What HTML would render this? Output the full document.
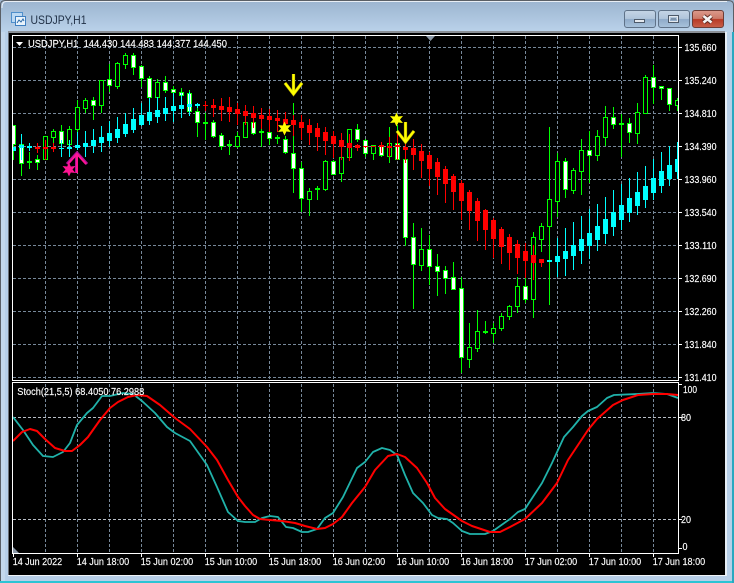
<!DOCTYPE html>
<html><head><meta charset="utf-8"><title>USDJPY,H1</title>
<style>
html,body{margin:0;padding:0;background:#b9d1ea;width:734px;height:583px;overflow:hidden}
svg{display:block}
text{font-family:"Liberation Sans",sans-serif;fill:#fff;font-size:10.5px;stroke:#fff;stroke-width:.15px}
.c{shape-rendering:crispEdges}
</style></head><body>
<svg width="734" height="583" viewBox="0 0 734 583" xmlns="http://www.w3.org/2000/svg">
<defs>
<linearGradient id="tb" x1="0" y1="0" x2="0" y2="1"><stop offset="0" stop-color="#9bb4cf"/><stop offset="1" stop-color="#bad2ea"/></linearGradient>
<linearGradient id="btn" x1="0" y1="0" x2="0" y2="1"><stop offset="0" stop-color="#c5d5e6"/><stop offset=".48" stop-color="#b0c5db"/><stop offset=".52" stop-color="#8fabc9"/><stop offset="1" stop-color="#a9c3dc"/></linearGradient>
<linearGradient id="cls" x1="0" y1="0" x2="0" y2="1"><stop offset="0" stop-color="#dc9a8c"/><stop offset=".48" stop-color="#cc7a68"/><stop offset=".52" stop-color="#b83a26"/><stop offset="1" stop-color="#c8604a"/></linearGradient>
<clipPath id="m"><rect x="13" y="36" width="666" height="344"/></clipPath>
<clipPath id="s"><rect x="13" y="383" width="666" height="170"/></clipPath>
</defs>
<!-- window frame -->
<rect width="734" height="583" fill="#b7cfe8"/>
<rect x="0" y="0" width="734" height="32" fill="url(#tb)"/>
<path d="M0.5 583V5Q0.5 .5 5 .5H728Q733.5 .5 733.5 5V583" fill="none" stroke="#5a5f66"/>
<path d="M2 8Q2 1.5 6 1.5H727" fill="none" stroke="#e8eef5"/>
<rect x="1" y="32" width="4" height="549" fill="#c4d8ec"/>
<rect x="725" y="32" width="2" height="544" fill="#e6eef6"/>
<rect x="0" y="581" width="734" height="2" fill="#2cc4d4"/>
<rect x="732" y="32" width="2" height="551" fill="#2aa8c0"/>
<rect x="8" y="31" width="717" height="2" fill="#8a8f96"/>
<rect x="8" y="33" width="1" height="542" fill="#6a6f76"/>
<rect x="9" y="33" width="716" height="542" fill="#000"/>
<rect x="8" y="575" width="718" height="1" fill="#f0f4f8"/>
<!-- icon -->
<g class="c">
<rect x="11.5" y="12.5" width="11" height="10" fill="#bcd9f3" stroke="#4f8fcb"/>
<rect x="15.5" y="16.5" width="10" height="9" fill="#eaf4fc" stroke="#3f7fc0"/>
</g>
<path d="M17 23l2-3 2 2 2-3 1 2" fill="none" stroke="#2b6aa8"/>
<text x="30.500" y="24" style="font-size:12px;fill:#1f2f45;stroke:none" textLength="56" lengthAdjust="spacingAndGlyphs">USDJPY,H1</text>
<!-- buttons -->
<rect x="624.500" y="10.500" width="31" height="17" rx="2.500" fill="url(#btn)" stroke="#5f7288"/>
<rect x="658.500" y="10.500" width="31" height="17" rx="2.500" fill="url(#btn)" stroke="#5f7288"/>
<rect x="692.500" y="10.500" width="31" height="17" rx="2.500" fill="url(#cls)" stroke="#6e3d36"/>
<rect x="634.500" y="19.500" width="10" height="3" fill="#e4e9ef" stroke="#4d5a6a" class="c"/>
<rect x="668.500" y="15.500" width="10" height="7" fill="none" stroke="#4d5a6a" class="c"/>
<rect x="669.500" y="16.500" width="8" height="5" fill="none" stroke="#e4e9ef" class="c"/>
<rect x="671" y="18" width="5" height="2" fill="#7d93ab" class="c"/>
<path d="M703.500 16l8 6.500M711.500 16l-8 6.500" stroke="#5d2a22" stroke-width="4.500" fill="none"/>
<path d="M703.500 16l8 6.500M711.500 16l-8 6.500" stroke="#f4f4f4" stroke-width="2.600" fill="none"/>

<!-- grid -->
<g class="c" fill="none" stroke="#778899" stroke-dasharray="3 2">
<path d="M13 47.500H679M13 80.500H679M13 113.500H679M13 146.500H679M13 179.500H679M13 212.500H679M13 245.500H679M13 278.500H679M13 311.500H679M13 344.500H679M13 377.500H679"/>
<path d="M45.500 36V380M77.500 36V380M109.500 36V380M141.500 36V380M173.500 36V380M205.500 36V380M237.500 36V380M269.500 36V380M301.500 36V380M333.500 36V380M365.500 36V380M397.500 36V380M429.500 36V380M461.500 36V380M493.500 36V380M525.500 36V380M557.500 36V380M589.500 36V380M621.500 36V380M653.500 36V380"/>
<path d="M45.500 384V553M77.500 384V553M109.500 384V553M141.500 384V553M173.500 384V553M205.500 384V553M237.500 384V553M269.500 384V553M301.500 384V553M333.500 384V553M365.500 384V553M397.500 384V553M429.500 384V553M461.500 384V553M493.500 384V553M525.500 384V553M557.500 384V553M589.500 384V553M621.500 384V553M653.500 384V553"/>
<path stroke="#b8bec6" d="M13 417.500H679M13 519.500H679"/>
</g>

<!-- candles -->
<g class="c" clip-path="url(#m)">
<path fill="none" stroke="#00ff00" d="M13.500 125V160M21.500 144V176M29.500 152V169M37.500 155V170M45.500 136V160M53.500 129V147M61.500 125V157M69.500 126V157M77.500 100V137M85.500 98V113M93.500 97V120M101.500 80V113M109.500 64V92M117.500 62V89M125.500 53V69M133.500 53V75M141.500 65V87M149.500 76V104M157.500 79V103M165.500 76V93M173.500 86V100M181.500 88V100M189.500 90V112M197.500 107V137M205.500 113V140M213.500 120V138M221.500 133V150M229.500 140V155M237.500 132V148M245.500 122V137M253.500 122V135M261.500 125V147M269.500 130V145M277.500 135V144M285.500 136V154M293.500 103V193M301.500 162V212M309.500 188V216M317.500 186V200M325.500 160V191M333.500 160V175M341.500 146V182M349.500 129V158M357.500 124V142M365.500 139V157M373.500 145V160M381.500 143V157M389.500 127V163M397.500 125V160M405.500 145V246M413.500 223V309M421.500 228V271M429.500 235V285M437.500 254V296M445.500 266V294M453.500 262V290M461.500 277V373M469.500 323V368M477.500 310V352M485.500 321V334M493.500 323V343M501.500 313V331M509.500 305V320M517.500 277V313M525.500 278V303M533.500 232V318M541.500 223V252M549.500 127V305M557.500 153V217M565.500 158V198M573.500 168V194M581.500 139V195M589.500 131V183M597.500 130V161M605.500 106V146M613.500 107V129M621.500 114V157M629.500 118V143M637.500 103V144M645.500 75V113M653.500 65V104M661.500 87V100M669.500 88V111M677.500 98V111"/>
<path fill="#000" stroke="#00ff00" d="M43.500 136.500h4V159.500h-4zM51.500 131.500h4V137.500h-4zM67.500 129.500h4V144.500h-4zM75.500 107.500h4V129.500h-4zM83.500 100.500h4V108.500h-4zM99.500 80.500h4V105.500h-4zM115.500 63.500h4V86.500h-4zM123.500 55.500h4V64.500h-4zM155.500 82.500h4V97.500h-4zM235.500 136.500h4V146.500h-4zM243.500 122.500h4V137.500h-4zM307.500 191.500h4V199.500h-4zM323.500 161.500h4V189.500h-4zM339.500 157.500h4V173.500h-4zM347.500 129.500h4V157.500h-4zM371.500 145.500h4V153.500h-4zM387.500 143.500h4V156.500h-4zM419.500 249.500h4V265.500h-4zM467.500 347.500h4V359.500h-4zM475.500 331.500h4V348.500h-4zM491.500 328.500h4V333.500h-4zM499.500 316.500h4V328.500h-4zM507.500 306.500h4V316.500h-4zM515.500 286.500h4V306.500h-4zM531.500 237.500h4V299.500h-4zM539.500 226.500h4V239.500h-4zM547.500 199.500h4V226.500h-4zM555.500 161.500h4V201.500h-4zM571.500 170.500h4V190.500h-4zM579.500 150.500h4V171.500h-4zM595.500 136.500h4V155.500h-4zM603.500 117.500h4V137.500h-4zM635.500 112.500h4V133.500h-4zM643.500 77.500h4V113.500h-4zM675.500 100.500h4V105.500h-4z"/>
<path fill="#fff" stroke="#00ff00" d="M11.500 125.500h4V144.500h-4zM19.500 144.500h4V163.500h-4zM35.500 159.500h4V162.500h-4zM59.500 131.500h4V143.500h-4zM91.500 100.500h4V105.500h-4zM107.500 79.500h4V85.500h-4zM131.500 55.500h4V67.500h-4zM139.500 66.500h4V78.500h-4zM147.500 78.500h4V97.500h-4zM163.500 82.500h4V90.500h-4zM171.500 89.500h4V92.500h-4zM179.500 92.500h4V95.500h-4zM187.500 93.500h4V111.500h-4zM195.500 111.500h4V122.500h-4zM211.500 122.500h4V136.500h-4zM219.500 135.500h4V146.500h-4zM251.500 122.500h4V133.500h-4zM267.500 132.500h4V138.500h-4zM283.500 139.500h4V152.500h-4zM291.500 153.500h4V168.500h-4zM299.500 168.500h4V198.500h-4zM331.500 161.500h4V174.500h-4zM355.500 129.500h4V139.500h-4zM363.500 140.500h4V153.500h-4zM379.500 145.500h4V155.500h-4zM395.500 143.500h4V159.500h-4zM403.500 159.500h4V237.500h-4zM411.500 237.500h4V264.500h-4zM427.500 249.500h4V266.500h-4zM435.500 266.500h4V271.500h-4zM443.500 270.500h4V278.500h-4zM451.500 277.500h4V289.500h-4zM459.500 288.500h4V357.500h-4zM523.500 286.500h4V299.500h-4zM563.500 161.500h4V189.500h-4zM587.500 150.500h4V155.500h-4zM611.500 117.500h4V124.500h-4zM627.500 123.500h4V132.500h-4zM651.500 77.500h4V87.500h-4zM659.500 86.500h4V88.500h-4zM667.500 88.500h4V104.500h-4z"/>
<path fill="#00ff00" d="M27 161h5v2h-5zM203 122h5v2h-5zM227 144h5v2h-5zM259 131h5v2h-5zM275 137h5v2h-5zM315 188h5v2h-5zM483 331h5v2h-5zM619 123h5v2h-5z"/>
<!-- cyan overlay -->
<path fill="none" stroke="#00ffff" d="M21.500 134V160M29.500 143V151M61.500 140V157M69.500 140V157M77.500 132V150M85.500 131V157M93.500 129V153M101.500 126V152M109.500 121V147M117.500 117V143M125.500 113V137M133.500 108V133M141.500 103V126M149.500 98V125M157.500 97V123M165.500 97V121M173.500 93V122M181.500 93V118M189.500 92V116M197.500 103V108M557.500 238V277M565.500 228V276M573.500 222V270M581.500 216V264M589.500 209V259M597.500 204V251M605.500 197V244M613.500 190V236M621.500 184V230M629.500 178V222M637.500 172V215M645.500 166V208M653.500 159V200M661.500 152V193M669.500 146V186M677.500 142V179"/>
<path fill="#00ffff" d="M11 147h5v4h-5zM19 145h5v3h-5zM27 146h5v2h-5zM59 148h5v1h-5zM67 147h5v2h-5zM75 145h5v3h-5zM83 143h5v4h-5zM91 140h5v6h-5zM99 137h5v6h-5zM107 133h5v8h-5zM115 129h5v9h-5zM123 124h5v10h-5zM131 119h5v11h-5zM139 115h5v10h-5zM147 112h5v9h-5zM155 110h5v7h-5zM163 108h5v6h-5zM171 106h5v5h-5zM179 105h5v4h-5zM187 104h5v3h-5zM195 104h5v2h-5zM547 260h5v2h-5zM555 256h5v6h-5zM563 251h5v8h-5zM571 245h5v11h-5zM579 239h5v12h-5zM587 233h5v13h-5zM595 226h5v14h-5zM603 219h5v15h-5zM611 212h5v15h-5zM619 205h5v15h-5zM627 198h5v15h-5zM635 192h5v14h-5zM643 186h5v14h-5zM651 178h5v15h-5zM659 171h5v15h-5zM667 165h5v14h-5zM675 159h5v13h-5z"/>
<!-- red overlay -->
<path fill="none" stroke="#ff0000" d="M37.500 143V153M45.500 140V160M53.500 143V152M205.500 101V111M213.500 99V117M221.500 98V121M229.500 97V122M237.500 103V125M245.500 105V125M253.500 106V128M261.500 108V129M269.500 109V132M277.500 110V132M285.500 112V133M293.500 115V136M301.500 115V140M309.500 119V145M317.500 123V151M325.500 127V155M333.500 131V158M341.500 133V160M349.500 134V161M357.500 144V151M365.500 146V148M381.500 142V153M389.500 137V157M397.500 133V160M405.500 138V163M413.500 139V170M421.500 144V178M429.500 152V186M437.500 158V195M445.500 166V203M453.500 174V210M461.500 180V220M469.500 190V230M477.500 198V241M485.500 209V250M493.500 218V258M501.500 227V264M509.500 234V270M517.500 240V274M525.500 243V278M533.500 245V280M541.500 259V267"/>
<path fill="#ff0000" d="M35 147h5v2h-5zM43 147h5v2h-5zM51 147h5v2h-5zM203 105h5v1h-5zM211 105h5v3h-5zM219 106h5v4h-5zM227 107h5v5h-5zM235 109h5v5h-5zM243 111h5v5h-5zM251 113h5v5h-5zM259 115h5v4h-5zM267 116h5v4h-5zM275 118h5v3h-5zM283 119h5v5h-5zM291 120h5v5h-5zM299 122h5v6h-5zM307 125h5v8h-5zM315 128h5v9h-5zM323 132h5v9h-5zM331 136h5v8h-5zM339 140h5v7h-5zM347 143h5v5h-5zM355 145h5v3h-5zM363 146h5v1h-5zM371 146h5v1h-5zM379 145h5v2h-5zM387 146h5v2h-5zM395 145h5v2h-5zM403 147h5v3h-5zM411 148h5v7h-5zM419 151h5v10h-5zM427 155h5v14h-5zM435 162h5v15h-5zM443 169h5v15h-5zM451 176h5v16h-5zM459 183h5v18h-5zM467 192h5v19h-5zM475 201h5v20h-5zM483 210h5v20h-5zM491 220h5v19h-5zM499 229h5v18h-5zM507 237h5v16h-5zM515 244h5v14h-5zM523 251h5v10h-5zM531 255h5v8h-5zM539 259h5v4h-5z"/>
</g>

<!-- arrows and stars -->
<g fill="none" stroke-linejoin="miter">
<path d="M76.500 173V155M67 164l10-11 10 11" stroke="#b0109a" stroke-width="3"/>
<path d="M77 173V155M68 164l9-10 9 10" stroke="#ff1493" stroke-width="2"/>
<path d="M293.500 74V94M285 83l8.500 11 8.500-11" stroke="#b8a800" stroke-width="3.200"/>
<path d="M293.500 74V94M285 83l8.500 11 8.500-11" stroke="#ffff00" stroke-width="2.200"/>
<path d="M405.500 122V142M397 131l8.500 11 8.500-11" stroke="#b8a800" stroke-width="3.200"/>
<path d="M405.500 122V142M397 131l8.500 11 8.500-11" stroke="#ffff00" stroke-width="2.200"/>
</g>
<polygon transform="translate(69 169.500)" fill="#ff1493" points="0,-7 1.800,-3 6.500,-3.500 3.500,0 6.500,3.500 1.800,3 0,7 -1.800,3 -6.500,3.500 -3.500,0 -6.500,-3.500 -1.800,-3"/>
<polygon transform="translate(284.500 128.500)" fill="#ffff00" points="0,-7 1.800,-3 6.500,-3.500 3.500,0 6.500,3.500 1.800,3 0,7 -1.800,3 -6.500,3.500 -3.500,0 -6.500,-3.500 -1.800,-3"/>
<polygon transform="translate(396.500 119.500)" fill="#ffff00" points="0,-7 1.800,-3 6.500,-3.500 3.500,0 6.500,3.500 1.800,3 0,7 -1.800,3 -6.500,3.500 -3.500,0 -6.500,-3.500 -1.800,-3"/>

<!-- stochastic -->
<g clip-path="url(#s)" fill="none" stroke-linejoin="round">
<polyline stroke="#20b2aa" stroke-width="1.800" points="13,417 23,430 33,445 43,456 53,457 63,452 70,443 77,425 87,413 93,408 102,396 110,396 123,393 133,394 142,401 155,413 167,427 175,433 190,441 207,465 217,487 228,512 238,521 245,522 255,522 262,518 270,516 278,517 286,527 293,528 302,532 308,532 317,529 325,518 333,513 343,497 357,468 365,462 373,452 382,448 390,450 397,455 405,475 413,493 423,503 432,515 438,518 447,519 453,523 462,531 470,534 485,534 493,531 510,519 518,512 525,509 542,483 552,463 564,437 573,427 582,416 588,411 597,407 607,398 614,395 637,394 653,393 667,394 678,398"/>
<polyline stroke="#ff0000" stroke-width="2" points="13,441 22,432 30,429 37,431 45,439 55,448 65,451 72,451 80,445 88,437 100,420 110,408 118,402 128,397 137,395 147,396 160,405 175,418 190,429 207,447 217,460 228,480 238,497 245,506 253,515 260,519 270,520 282,521 295,523 305,526 317,529 325,528 333,524 342,517 352,503 365,487 375,470 388,456 397,454 405,457 417,468 427,483 435,498 445,509 462,521 472,526 490,532 500,532 510,527 525,519 542,503 557,483 568,460 588,430 597,419 613,405 623,400 638,395 653,394 667,394 678,395"/>
</g>

<!-- frames -->
<g class="c">
<path fill="none" stroke="#fff" d="M12.500 35.500H678.500V380.500H12.500ZM12.500 382.500H678.500V553.500H12.500Z"/>
<path stroke="#fff" fill="none" d="M679 47.500h3M679 80.500h3M679 113.500h3M679 146.500h3M679 179.500h3M679 212.500h3M679 245.500h3M679 278.500h3M679 311.500h3M679 344.500h3M679 377.500h3M679 384.500h3M679 417.500h3M679 519.500h3M679 548.500h3M13.500 554v3M77.500 554v3M141.500 554v3M205.500 554v3M269.500 554v3M333.500 554v3M397.500 554v3M461.500 554v3M525.500 554v3M589.500 554v3M653.500 554v3"/>
</g>
<polygon points="426,36 435,36 430.500,41" fill="#8a97a6"/>
<polygon points="13,547 13,553 19,553" fill="#8a97a6"/>
<polygon points="16,42 23,42 19.500,46" fill="#fff"/>

<!-- text -->
<text x="28" y="47" textLength="199" lengthAdjust="spacingAndGlyphs" xml:space="preserve">USDJPY,H1  144.430 144.483 144.377 144.450</text>
<text x="17.300" y="395" textLength="127" lengthAdjust="spacingAndGlyphs">Stoch(21,5,5) 68.4050 76.2988</text>
<g>
<text x="684.500" y="51" textLength="32" lengthAdjust="spacingAndGlyphs">135.660</text>
<text x="684.500" y="84" textLength="32" lengthAdjust="spacingAndGlyphs">135.240</text>
<text x="684.500" y="117" textLength="32" lengthAdjust="spacingAndGlyphs">134.810</text>
<text x="684.500" y="150" textLength="32" lengthAdjust="spacingAndGlyphs">134.390</text>
<text x="684.500" y="183" textLength="32" lengthAdjust="spacingAndGlyphs">133.960</text>
<text x="684.500" y="216" textLength="32" lengthAdjust="spacingAndGlyphs">133.540</text>
<text x="684.500" y="249" textLength="32" lengthAdjust="spacingAndGlyphs">133.110</text>
<text x="684.500" y="282" textLength="32" lengthAdjust="spacingAndGlyphs">132.690</text>
<text x="684.500" y="315" textLength="32" lengthAdjust="spacingAndGlyphs">132.260</text>
<text x="684.500" y="348" textLength="32" lengthAdjust="spacingAndGlyphs">131.840</text>
<text x="684.500" y="381" textLength="32" lengthAdjust="spacingAndGlyphs">131.410</text>
<text x="683" y="393" textLength="14" lengthAdjust="spacingAndGlyphs">100</text>
<text x="681" y="421" textLength="10" lengthAdjust="spacingAndGlyphs">80</text>
<text x="681" y="523" textLength="10" lengthAdjust="spacingAndGlyphs">20</text>
<text x="682.500" y="550" textLength="5" lengthAdjust="spacingAndGlyphs">0</text>
</g>
<g>
<text x="12.700" y="565" textLength="49.500" lengthAdjust="spacingAndGlyphs">14 Jun 2022</text>
<text x="76.700" y="565" textLength="52.500" lengthAdjust="spacingAndGlyphs">14 Jun 18:00</text>
<text x="140.700" y="565" textLength="52.500" lengthAdjust="spacingAndGlyphs">15 Jun 02:00</text>
<text x="204.700" y="565" textLength="52.500" lengthAdjust="spacingAndGlyphs">15 Jun 10:00</text>
<text x="268.700" y="565" textLength="52.500" lengthAdjust="spacingAndGlyphs">15 Jun 18:00</text>
<text x="332.700" y="565" textLength="52.500" lengthAdjust="spacingAndGlyphs">16 Jun 02:00</text>
<text x="396.700" y="565" textLength="52.500" lengthAdjust="spacingAndGlyphs">16 Jun 10:00</text>
<text x="460.700" y="565" textLength="52.500" lengthAdjust="spacingAndGlyphs">16 Jun 18:00</text>
<text x="524.700" y="565" textLength="52.500" lengthAdjust="spacingAndGlyphs">17 Jun 02:00</text>
<text x="588.700" y="565" textLength="52.500" lengthAdjust="spacingAndGlyphs">17 Jun 10:00</text>
<text x="652.700" y="565" textLength="52.500" lengthAdjust="spacingAndGlyphs">17 Jun 18:00</text>
</g>
</svg>
</body></html>
